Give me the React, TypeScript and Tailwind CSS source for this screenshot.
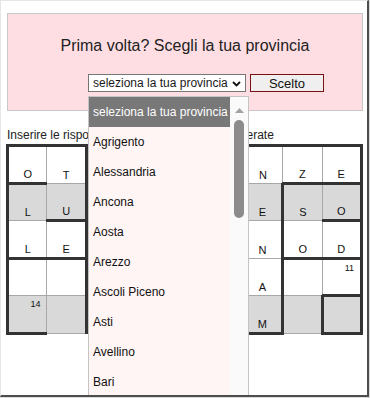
import React from "react"

type Cell = { ch?: string; n?: string; t?: boolean; r?: boolean; b?: boolean; l?: boolean }

const grid: Cell[][] = [
  [{ ch: "O", t: true, l: true, b: true }, { ch: "T", t: true, r: true }, { t: true }, { t: true }, { t: true }, { t: true }, { ch: "N", t: true }, { ch: "Z", t: true }, { ch: "E", t: true, r: true }],
  [{ ch: "L", l: true }, { ch: "U", b: true, r: true }, {}, {}, {}, {}, { ch: "E" }, { ch: "S", t: true, l: true }, { ch: "O", t: true, b: true, r: true }],
  [{ ch: "L", l: true, b: true }, { ch: "E", r: true, b: true }, {}, {}, {}, {}, { ch: "N" }, { ch: "O", l: true, b: true }, { ch: "D", b: true, r: true }],
  [{ l: true }, { r: true }, {}, {}, {}, {}, { ch: "A", r: true }, { l: true }, { n: "11", b: true, r: true }],
  [{ n: "14", l: true, b: true }, { r: true }, {}, {}, {}, {}, { ch: "M", r: true, b: true }, {}, { t: true, l: true, r: true, b: true }],
]

const grayRows = [1, 4]

const province = ["Agrigento", "Alessandria", "Ancona", "Aosta", "Arezzo", "Ascoli Piceno", "Asti", "Avellino", "Bari"]

export default function App() {
  return (
    <div className="w-[370px] h-[398px] bg-[#dcdcdc] font-['Liberation_Sans',Arial,sans-serif] text-[#1a1a1a]">
      <div className="relative w-[369px] h-[397px] overflow-hidden bg-white border-t border-l border-t-[#e6e6e6] border-l-[#e6e6e6] border-r-2 border-b-2 border-r-[#4d4d4d] border-b-[#4d4d4d]">
        <div className="pt-[12px] pl-[6px] pr-[4px]">
          {/* Provincia box */}
          <div className="h-[98px] border border-[#c8c8c8] bg-[#ffdee3] flex flex-col">
            <h1 className="self-center mt-[22px] text-[16px] leading-[19px] text-[#222]">Prima volta? Scegli la tua provincia</h1>
            <div className="mt-[19px] ml-[80px] flex gap-[4px]">
              <div className="w-[158px] h-[18px] border border-[#767676] bg-white flex items-center justify-between pl-[4px] pr-[4px] text-[12px] leading-[14px]">
                <span>seleziona la tua provincia</span>
                <svg width="9" height="6" viewBox="0 0 9 6" className="mt-[1px]">
                  <path d="M1 1 L4.5 4.5 L8 1" fill="none" stroke="#111" strokeWidth="1.8" />
                </svg>
              </div>
              <button className="w-[74px] h-[18px] border border-[#7a1010] bg-[#efefef] text-[13px] leading-[15px] text-[#111]">Scelto</button>
            </div>
          </div>

          <p className="mt-[17px] text-[12px] leading-[14px] text-[#222]">Inserire le risposte nelle caselle bianche numerate</p>

          {/* Griglia */}
          <table className="mt-[2px] -ml-[1px] border-collapse table-fixed">
            <tbody>
              {grid.map((row, ri) => (
                <tr key={ri} className="h-[37.6px]">
                  {row.map((c, ci) => (
                    <td
                      key={ci}
                      className={[
                        "relative w-[40px] p-0 pb-[1px] align-bottom text-center text-[11px] leading-[13px] text-[#111] border border-[#a8a8a8]",
                        grayRows.includes(ri) ? "bg-[#d9d9d9]" : "bg-white",
                        c.t ? "border-t-[3px] border-t-[#333]" : "",
                        c.r ? "border-r-[3px] border-r-[#333]" : "",
                        c.b ? "border-b-[3px] border-b-[#333]" : "",
                        c.l ? "border-l-[3px] border-l-[#333]" : "",
                      ].join(" ")}
                    >
                      {c.n && <span className="absolute top-[3px] right-[6px] text-[9px] leading-[10px]">{c.n}</span>}
                      {c.ch}
                    </td>
                  ))}
                </tr>
              ))}
            </tbody>
          </table>
        </div>

        {/* Menu a tendina aperto */}
        <div className="absolute left-[87px] top-[95px] w-[161px] h-[310px] border border-[#c4c4c4] bg-[#fff5f5] flex">
          <div className="flex-1 text-[12px] leading-[14px] text-[#111]">
            <div className="h-[30px] flex items-center pl-[4px] bg-[#787878] text-white">seleziona la tua provincia</div>
            {province.map(p => (
              <div key={p} className="h-[30px] flex items-center pl-[4px]">{p}</div>
            ))}
          </div>
          <div className="w-[18px] bg-[#fafafa] flex flex-col items-center">
            <svg width="9" height="5" viewBox="0 0 9 5" className="mt-[11px]">
              <path d="M0 5 L4.5 0 L9 5 Z" fill="#a3a3a3" />
            </svg>
            <div className="mt-[7px] w-[10px] h-[98px] rounded-full bg-[#8c8c8c]" />
          </div>
        </div>
      </div>
    </div>
  )
}
